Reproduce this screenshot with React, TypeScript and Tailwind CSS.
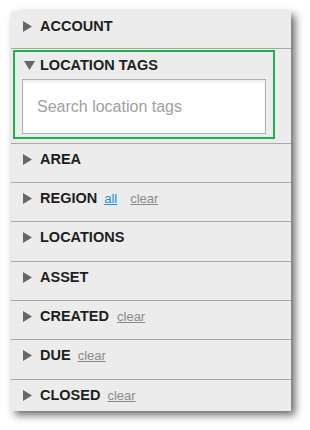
import React from "react";

function TriRight() {
  return (
    <svg width="9" height="11" viewBox="0 0 9 11" className="shrink-0">
      <polygon points="0,0 9,5.5 0,11" fill="#676767" />
    </svg>
  );
}

function TriDown() {
  return (
    <svg width="11" height="9" viewBox="0 0 11 9" className="shrink-0">
      <polygon points="0,0 11,0 5.5,9" fill="#676767" />
    </svg>
  );
}

function Row({
  label,
  h,
  last,
  children,
}: {
  label: string;
  h: string;
  last?: boolean;
  children?: React.ReactNode;
}) {
  return (
    <div className={`${h} ${last ? "" : "border-b border-[#a8a8a8]"} pl-[12px] pt-[5px]`}>
      <div className="flex items-center h-[20px]">
        <TriRight />
        <div className="ml-[8px] flex items-baseline">
          <span className="text-[14.5px] leading-[20px] font-bold text-[#1e1e1e]">{label}</span>
          {children}
        </div>
      </div>
    </div>
  );
}

export default function App() {
  return (
    <div className="w-[310px] h-[430px] bg-white pt-[11px] pl-[11px] font-['Liberation_Sans',Arial,sans-serif]">
      <div className="w-[280px] h-[400px] bg-[#ececec] shadow-[4px_4px_8px_rgba(0,0,0,0.6)] overflow-hidden flex flex-col">
        <Row label="ACCOUNT" h="h-[38px]" />
        <div className="h-[95px] border-b border-[#a8a8a8] pt-[1px] pl-[2px]">
          <div className="w-[262px] h-[89px] border-2 border-[#1fb14a] pl-[9px] pt-[3px]">
            <div className="flex items-center h-[20px]">
              <TriDown />
              <span className="ml-[5px] text-[14.5px] leading-[20px] font-bold text-[#1e1e1e]">LOCATION TAGS</span>
            </div>
            <div className="mt-[4px] w-[244px] h-[55px] -ml-[2px] border border-[#b0b0b0] bg-white shadow-[inset_0_2px_3px_rgba(0,0,0,0.08)] flex items-center pl-[14px]">
              <span className="text-[16px] text-[#a0a0a0]">Search location tags</span>
            </div>
          </div>
        </div>
        <Row label="AREA" h="h-[39px]" />
        <Row label="REGION" h="h-[39px]">
          <span className="ml-[7px] text-[13px] text-[#1a8fe3] underline">all</span>
          <span className="ml-[13px] text-[13px] text-[#8a8a8a] underline">clear</span>
        </Row>
        <Row label="LOCATIONS" h="h-[40px]" />
        <Row label="ASSET" h="h-[39px]" />
        <Row label="CREATED" h="h-[39px]">
          <span className="ml-[8px] text-[13px] text-[#8a8a8a] underline">clear</span>
        </Row>
        <Row label="DUE" h="h-[40px]">
          <span className="ml-[7px] text-[13px] text-[#8a8a8a] underline">clear</span>
        </Row>
        <Row label="CLOSED" h="flex-1" last>
          <span className="ml-[7px] text-[13px] text-[#8a8a8a] underline">clear</span>
        </Row>
      </div>
    </div>
  );
}
